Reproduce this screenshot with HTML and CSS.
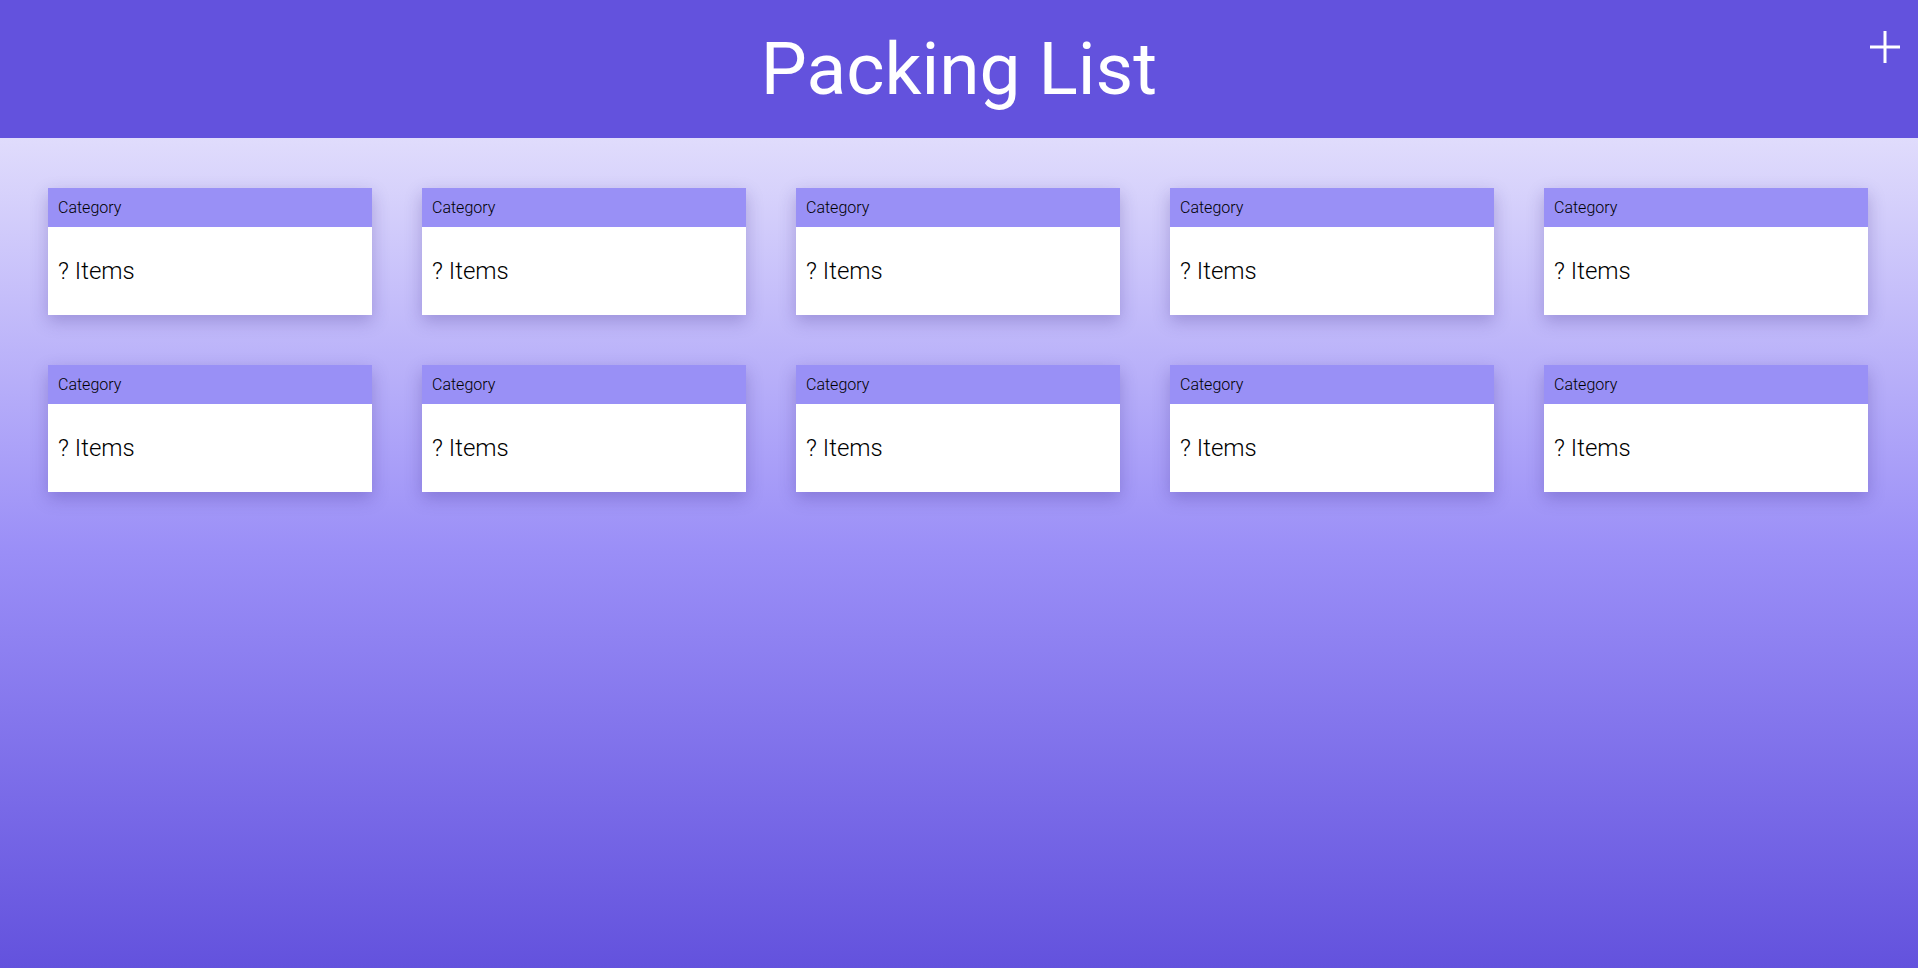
FILE: index.html
```html
<!DOCTYPE html>
<html>
<head>
	<meta charset="utf-8">
	<title>Packing List</title>
	<link rel="stylesheet" href="styles.css">
</head>
<body>
	<div id="header">
		<h1>Packing List</h1>
		<button id="addCategory" title="Add category">
			<svg width="30" height="32" viewBox="0 0 30 32"><path d="M0 16H30M15 0V32" stroke="#fff" stroke-width="3"/></svg>
		</button>
	</div>
	<div id="categoryView">
		<div class="category"><div class="title">Category</div><div class="count">? Items</div></div>
		<div class="category"><div class="title">Category</div><div class="count">? Items</div></div>
		<div class="category"><div class="title">Category</div><div class="count">? Items</div></div>
		<div class="category"><div class="title">Category</div><div class="count">? Items</div></div>
		<div class="category"><div class="title">Category</div><div class="count">? Items</div></div>
		<div class="category"><div class="title">Category</div><div class="count">? Items</div></div>
		<div class="category"><div class="title">Category</div><div class="count">? Items</div></div>
		<div class="category"><div class="title">Category</div><div class="count">? Items</div></div>
		<div class="category"><div class="title">Category</div><div class="count">? Items</div></div>
		<div class="category"><div class="title">Category</div><div class="count">? Items</div></div>
	</div>
</body>
</html>
```
FILE: styles.css
```css
html {
	height: 100%;
}
body {
	margin: 0;
	min-height: 100%;
	display: flex;
	flex-direction: column;
	font-family: Roboto, "Liberation Sans", sans-serif;
	font-weight: 300;
	background: #6352dd;
}
#header {
	position: relative;
	height: 138px;
	background: #6352dd;
	color: #fff;
}
#header h1 {
	margin: 0;
	font-size: 73px;
	font-weight: 400;
	text-align: center;
	line-height: 138px;
}
#header #addCategory {
	position: absolute;
	top: 31px;
	right: 18px;
	padding: 0;
	border: 0;
	background: none;
	cursor: pointer;
	line-height: 0;
}
#categoryView {
	flex: 1;
	display: flex;
	flex-wrap: wrap;
	align-content: flex-start;
	gap: 50px;
	padding: 50px 50px 50px 48px;
	background: linear-gradient(#e0dcfc, #9a8ef7 50%, #6352dd);
}
.category {
	width: 324px;
	background: #fff;
	box-shadow: 0 6px 16px rgba(40, 20, 120, 0.25);
	color: #000;
}
.category .title {
	height: 39px;
	line-height: 39px;
	padding: 0 10px;
	background: #9990f6;
	font-size: 16px;
}
.category .count {
	height: 88px;
	line-height: 88px;
	padding: 0 10px;
	font-size: 24px;
}
```
